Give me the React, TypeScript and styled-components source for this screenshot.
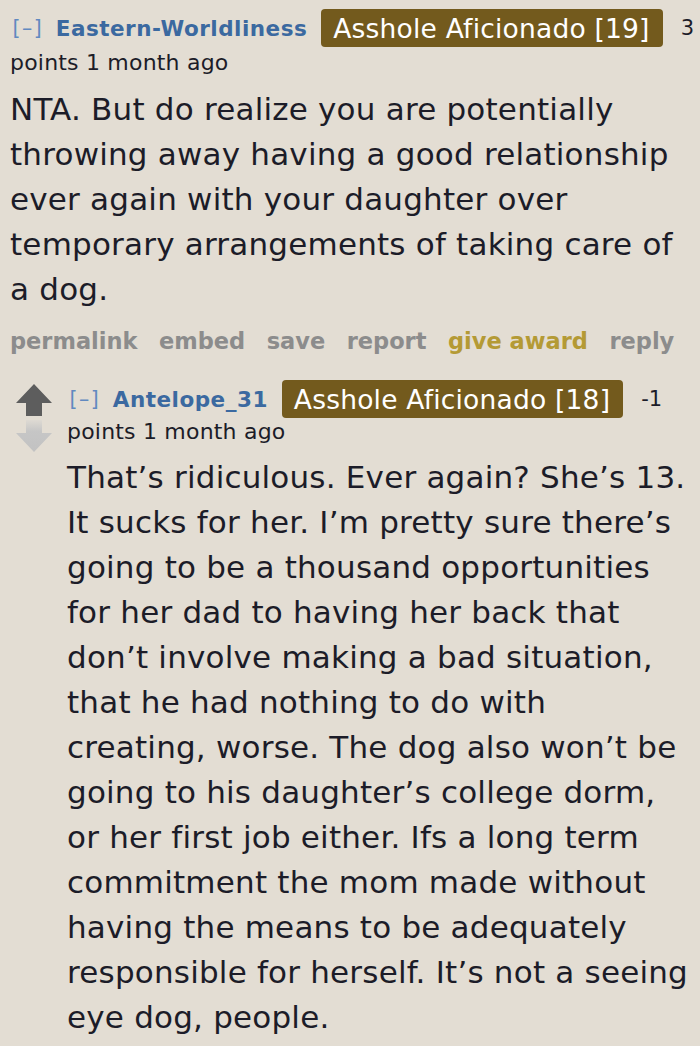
import React from "react";
import styled, { createGlobalStyle } from "styled-components";

const GlobalStyle = createGlobalStyle`
  html, body { margin: 0; padding: 0; background: #e3ddd3; }
  body { font-family: "DejaVu Sans", "Liberation Sans", sans-serif; color: #1c1c28; }
`;

const Page = styled.div`
  width: 700px;
  height: 1046px;
  overflow: hidden;
  background: #e3ddd3;
`;

const Comment = styled.div<{ $child?: boolean }>`
  display: flex;
  align-items: flex-start;
  padding-left: ${(p) => (p.$child ? "16px" : "10px")};
  padding-top: ${(p) => (p.$child ? "17px" : "9px")};
`;

const VoteCol = styled.div`
  width: 36px;
  margin-right: 15px;
  display: flex;
  flex-direction: column;
  align-items: center;
  gap: 4px;
  padding-top: 4px;
`;

const Entry = styled.div`
  flex: 1;
  min-width: 0;
`;

const Tagline = styled.div`
  display: flex;
  align-items: center;
  white-space: nowrap;
  height: 38px;
`;

const Toggle = styled.span`
  font-size: 20.5px;
  letter-spacing: 1.5px;
  color: #6189c0;
  margin: 0 12.5px 0 2.5px;
`;

const Author = styled.span`
  font-size: 21.5px;
  font-weight: bold;
  letter-spacing: 0.5px;
  color: #3b69a0;
  margin-right: 14px;
`;

const Flair = styled.span`
  display: inline-flex;
  align-items: center;
  height: 38px;
  padding: 0 13px 0 12px;
  border-radius: 4px;
  background: #735a1d;
  color: #fff;
  font-size: 26.5px;
  letter-spacing: 0.2px;
  margin-right: 18px;
`;

const Score = styled.span`
  font-size: 21px;
  color: #1c1c28;
`;

const Meta = styled.div<{ $child?: boolean }>`
  font-size: 22px;
  letter-spacing: 0.2px;
  line-height: ${(p) => (p.$child ? "28px" : "32px")};
  color: #1c1c28;
`;

const Body = styled.p<{ $child?: boolean }>`
  margin: ${(p) => (p.$child ? "8.5px" : "7.5px")} 0 0;
  font-size: 31px;
  letter-spacing: 0.2px;
  line-height: 45px;
  white-space: nowrap;
  color: #1c1c28;
`;

const Actions = styled.ul`
  list-style: none;
  margin: 7.5px 0 0;
  padding: 0;
  display: flex;
  gap: 21.5px;
  height: 44px;
  align-items: center;
`;

const Action = styled.li<{ $gold?: boolean }>`
  font-size: 22.5px;
  font-weight: bold;
  color: ${(p) => (p.$gold ? "#b49a35" : "#8c8c8c")};
`;

const UpArrow = () => (
  <svg width="36" height="32" viewBox="0 0 36 32">
    <polygon points="18,0 36,19 26,19 26,32 10,32 10,19 0,19" fill="#5d5d5d" />
  </svg>
);

const DownArrow = () => (
  <svg width="36" height="32" viewBox="0 0 36 32">
    <defs>
      <linearGradient id="dg" x1="0" y1="0" x2="0" y2="1">
        <stop offset="0" stopColor="#dedad3" />
        <stop offset="0.35" stopColor="#c6c6c6" />
        <stop offset="1" stopColor="#c2c2c2" />
      </linearGradient>
    </defs>
    <polygon points="10,0 26,0 26,13 36,13 18,32 0,13 10,13" fill="url(#dg)" />
  </svg>
);

const firstLines = [
  "NTA. But do realize you are potentially",
  "throwing away having a good relationship",
  "ever again with your daughter over",
  "temporary arrangements of taking care of",
  "a dog.",
];

const secondLines = [
  "That’s ridiculous. Ever again? She’s 13.",
  "It sucks for her. I’m pretty sure there’s",
  "going to be a thousand opportunities",
  "for her dad to having her back that",
  "don’t involve making a bad situation,",
  "that he had nothing to do with",
  "creating, worse. The dog also won’t be",
  "going to his daughter’s college dorm,",
  "or her first job either. Ifs a long term",
  "commitment the mom made without",
  "having the means to be adequately",
  "responsible for herself. It’s not a seeing",
  "eye dog, people.",
];

const renderLines = (lines: string[]) =>
  lines.map((l, i) => (
    <React.Fragment key={i}>
      {l}
      {i < lines.length - 1 && <br />}
    </React.Fragment>
  ));

export default function App() {
  return (
    <Page>
      <GlobalStyle />
      <Comment>
        <Entry>
          <Tagline>
            <Toggle>[–]</Toggle>
            <Author>Eastern-Worldliness</Author>
            <Flair>Asshole Aficionado [19]</Flair>
            <Score>3</Score>
          </Tagline>
          <Meta>points 1 month ago</Meta>
          <Body>{renderLines(firstLines)}</Body>
          <Actions>
            <Action>permalink</Action>
            <Action>embed</Action>
            <Action>save</Action>
            <Action>report</Action>
            <Action $gold>give award</Action>
            <Action>reply</Action>
          </Actions>
        </Entry>
      </Comment>
      <Comment $child>
        <VoteCol>
          <UpArrow />
          <DownArrow />
        </VoteCol>
        <Entry>
          <Tagline>
            <Toggle>[–]</Toggle>
            <Author>Antelope_31</Author>
            <Flair>Asshole Aficionado [18]</Flair>
            <Score>-1</Score>
          </Tagline>
          <Meta $child>points 1 month ago</Meta>
          <Body $child>{renderLines(secondLines)}</Body>
        </Entry>
      </Comment>
    </Page>
  );
}
